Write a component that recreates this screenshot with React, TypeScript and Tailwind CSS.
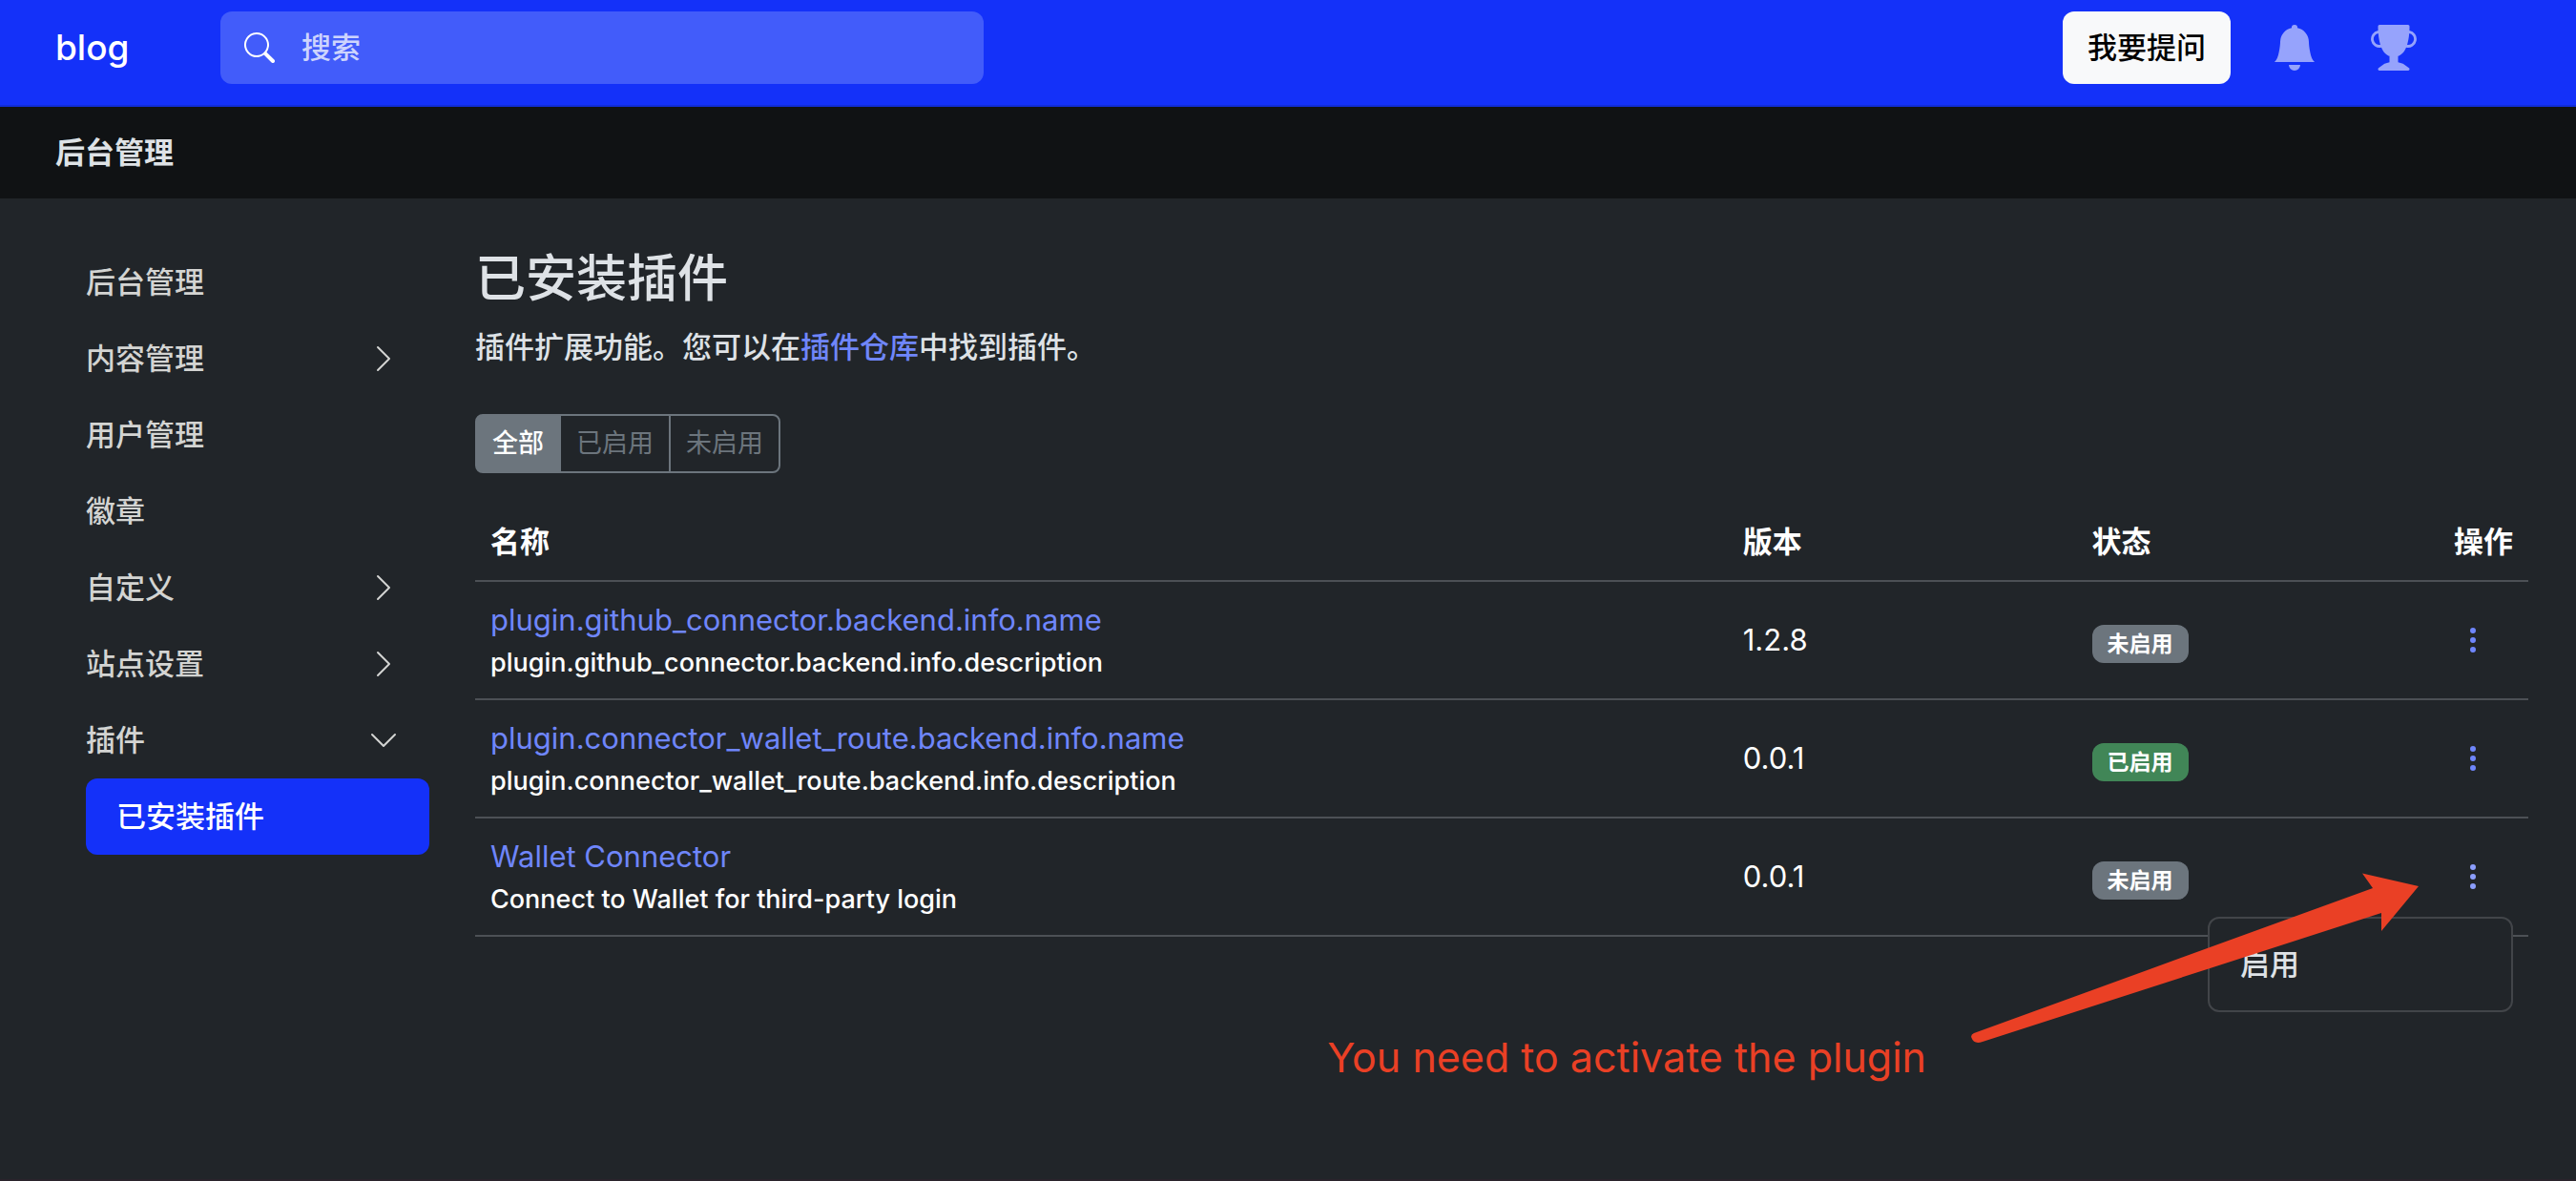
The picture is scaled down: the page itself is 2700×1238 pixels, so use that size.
import React from "react";
import {
  BsBellFill,
  BsChevronDown,
  BsChevronRight,
  BsSearch,
  BsThreeDotsVertical,
  BsTrophyFill,
} from "react-icons/bs";

type NavItem = { label: string; icon?: "right" | "down" };

const navItems: NavItem[] = [
  { label: "后台管理" },
  { label: "内容管理", icon: "right" },
  { label: "用户管理" },
  { label: "徽章" },
  { label: "自定义", icon: "right" },
  { label: "站点设置", icon: "right" },
  { label: "插件", icon: "down" },
];

type Plugin = {
  name: string;
  description: string;
  version: string;
  enabled: boolean;
  menuOpen?: boolean;
};

const plugins: Plugin[] = [
  {
    name: "plugin.github_connector.backend.info.name",
    description: "plugin.github_connector.backend.info.description",
    version: "1.2.8",
    enabled: false,
  },
  {
    name: "plugin.connector_wallet_route.backend.info.name",
    description: "plugin.connector_wallet_route.backend.info.description",
    version: "0.0.1",
    enabled: true,
  },
  {
    name: "Wallet Connector",
    description: "Connect to Wallet for third-party login",
    version: "0.0.1",
    enabled: false,
    menuOpen: true,
  },
];

function Header() {
  return (
    <header className="flex items-center border-b-2 border-[#112dd8] bg-[#1431f9] pt-3 pr-[167px] pb-[22px] pl-[58px]">
      <a
        href="#"
        className="w-[173px] text-[37px] leading-[60px] font-medium text-white"
      >
        blog
      </a>
      <form className="flex h-[76px] w-[800px] items-center rounded-xl bg-[#425cfa] px-[25px]">
        <BsSearch className="size-8 shrink-0 text-white" aria-hidden="true" />
        <input
          type="search"
          aria-label="搜索"
          placeholder="搜索"
          className="ml-7 min-w-0 flex-1 bg-transparent font-medium text-white outline-none placeholder:text-[#cdd4fd]"
        />
      </form>
      <div className="ml-auto flex items-center">
        <button
          type="button"
          className="h-[76px] rounded-xl bg-[#f8f9fa] px-[26px] font-medium text-black"
        >
          我要提问
        </button>
        <a href="#" aria-label="通知" className="ml-[43px] text-[#96a3fc]">
          <BsBellFill className="size-12" />
        </a>
        <a href="#" aria-label="成就" className="ml-14 text-[#96a3fc]">
          <BsTrophyFill className="size-12" />
        </a>
      </div>
    </header>
  );
}

function Sidebar() {
  return (
    <nav className="w-[360px] shrink-0 font-medium">
      {navItems.map((item) => (
        <a
          key={item.label}
          href="#"
          className="flex h-20 items-center justify-between pr-8 text-[#d3d4d2]"
        >
          {item.label}
          {item.icon === "right" && <BsChevronRight className="size-8" />}
          {item.icon === "down" && <BsChevronDown className="size-8" />}
        </a>
      ))}
      <a
        href="#"
        aria-current="page"
        className="flex h-20 items-center rounded-xl bg-[#1431f9] px-8 text-white"
      >
        已安装插件
      </a>
    </nav>
  );
}

function Filters() {
  return (
    <div className="mt-[46px] flex text-[27px] leading-[58px]">
      <button
        type="button"
        className="rounded-l-lg border-2 border-[#6c757d] bg-[#6c757d] px-4 font-medium text-white"
      >
        全部
      </button>
      <button
        type="button"
        className="border-y-2 border-[#6c757d] px-4 text-[#6c757d]"
      >
        已启用
      </button>
      <button
        type="button"
        className="rounded-r-lg border-2 border-[#6c757d] px-4 text-[#6c757d]"
      >
        未启用
      </button>
    </div>
  );
}

function StatusBadge({ enabled }: { enabled: boolean }) {
  return (
    <span
      className={`flex h-10 w-fit items-center rounded-xl px-4 text-[23px] leading-none font-bold text-white ${
        enabled ? "bg-[#418657]" : "bg-[#6c757d]"
      }`}
    >
      {enabled ? "已启用" : "未启用"}
    </span>
  );
}

function PluginRow({ plugin }: { plugin: Plugin }) {
  return (
    <tr className="border-b-2 border-[#4c5055]">
      <td className="px-4 py-4">
        <a href="#" className="block text-[#6f86fb]">
          {plugin.name}
        </a>
        <div className="text-[27px] leading-[42px] font-medium">
          {plugin.description}
        </div>
      </td>
      <td className="px-4 py-4">{plugin.version}</td>
      <td className="px-4 pt-6 pb-4">
        <StatusBadge enabled={plugin.enabled} />
      </td>
      <td className="relative py-4 pr-4">
        <button
          type="button"
          aria-label="操作"
          aria-expanded={!!plugin.menuOpen}
          className={`ml-auto block border-2 border-transparent px-6 ${
            plugin.menuOpen ? "text-[#8c9efc]" : "text-[#6f86fb]"
          }`}
        >
          <BsThreeDotsVertical className="size-8" />
        </button>
        {plugin.menuOpen && (
          <div className="absolute top-[103px] right-4 z-10 w-80 rounded-xl border-2 border-[#424549] bg-[#212529] py-4 font-medium">
            <button
              type="button"
              className="block w-full px-8 py-2 text-left text-[#dee2e6]"
            >
              启用
            </button>
          </div>
        )}
      </td>
    </tr>
  );
}

function PluginTable() {
  return (
    <div className="relative mt-8">
      <table className="w-full table-fixed border-collapse text-white">
        <colgroup>
          <col className="w-[61%]" />
          <col className="w-[17%]" />
          <col className="w-[17%]" />
          <col className="w-[5%]" />
        </colgroup>
        <thead>
          <tr className="border-b-2 border-[#4c5055] text-left">
            <th className="px-4 py-4 font-bold">名称</th>
            <th className="px-4 py-4 font-bold">版本</th>
            <th className="px-4 py-4 font-bold">状态</th>
            <th className="py-4 pr-4 text-right font-bold">操作</th>
          </tr>
        </thead>
        <tbody>
          {plugins.map((plugin) => (
            <PluginRow key={plugin.name} plugin={plugin} />
          ))}
        </tbody>
      </table>

      <svg
        viewBox="0 0 470 178"
        className="pointer-events-none absolute right-[115px] bottom-[-111px] z-20 h-[178px] w-[470px]"
        aria-hidden="true"
      >
        <path
          d="M4 168 L422 16 L411 0.500 L470 14 L431 61 L431 42 L13 177 Q4 180 1.500 173 Q0 170 4 168Z"
          fill="#ea4025"
        />
      </svg>
      <p className="absolute right-[631px] bottom-[-156px] text-[43px] leading-[60px] whitespace-nowrap text-[#ea4025]">
        You need to activate the plugin
      </p>
    </div>
  );
}

export default function App() {
  return (
    <div className="min-h-screen border-b-2 border-[#2a232b] bg-[#212529] font-['Inter','Noto_Sans_CJK_SC',sans-serif] text-[31px] leading-[48px] text-[#dee2e6]">
      <Header />
      <div className="bg-[#101214] px-[58px] py-6 font-bold">后台管理</div>
      <div className="flex gap-12 pt-12 pr-[50px] pl-[90px]">
        <Sidebar />
        <main className="min-w-0 flex-1">
          <h1 className="text-[53px] leading-[72px] font-medium">已安装插件</h1>
          <p className="mt-3 font-medium">
            插件扩展功能。您可以在
            <a href="#" className="text-[#6f86fb]">
              插件仓库
            </a>
            中找到插件。
          </p>
          <Filters />
          <PluginTable />
        </main>
      </div>
    </div>
  );
}
